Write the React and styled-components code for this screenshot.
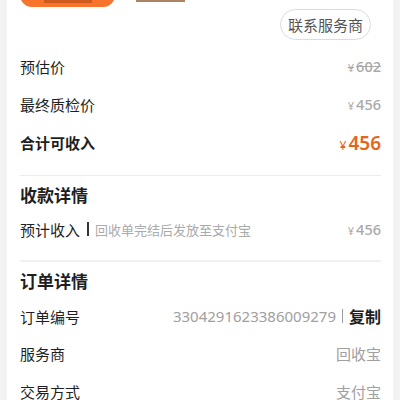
import React from 'react';
import styled, { createGlobalStyle } from 'styled-components';

const GlobalStyle = createGlobalStyle`
  html, body {
    margin: 0;
    padding: 0;
    background: #f2f2f2;
    font-family: "Noto Sans CJK SC", "Noto Sans", sans-serif;
  }
`;

export default function App() {
  return (
    <>
      <GlobalStyle />
      <Page>
        <Card>
          <TopActions>
            <PrimaryBtn>
              <BtnLabel />
            </PrimaryBtn>
            <GhostBtn />
          </TopActions>
          <ContactRow>
            <ContactBtn>联系服务商</ContactBtn>
          </ContactRow>

          <Row $h={38}>
            <Label>预估价</Label>
            <Price $strike>
              <Yen>¥</Yen>602
            </Price>
          </Row>
          <Row $h={38}>
            <Label>最终质检价</Label>
            <Price>
              <Yen>¥</Yen>456
            </Price>
          </Row>
          <Row $h={39}>
            <Label $bold>合计可收入</Label>
            <Price $total>
              <Yen $total>¥</Yen>456
            </Price>
          </Row>

          <Divider $top={13} />
          <Heading>收款详情</Heading>
          <Row $h={34}>
            <LabelGroup>
              <Label>预计收入</Label>
              <Bar />
              <Hint>回收单完结后发放至支付宝</Hint>
            </LabelGroup>
            <Price>
              <Yen>¥</Yen>456
            </Price>
          </Row>

          <Divider $top={14} $thick />
          <Heading>订单详情</Heading>
          <Row $h={36}>
            <Label>订单编号</Label>
            <ValueGroup>
              <Value>3304291623386009279</Value>
              <ThinBar />
              <CopyText>复制</CopyText>
            </ValueGroup>
          </Row>
          <Row $h={38}>
            <Label>服务商</Label>
            <Value>回收宝</Value>
          </Row>
          <Row $h={38}>
            <Label>交易方式</Label>
            <Value>支付宝</Value>
          </Row>
        </Card>
      </Page>
    </>
  );
}

const Page = styled.div`
  width: 400px;
  height: 400px;
  overflow: hidden;
  padding: 0 7px;
  box-sizing: border-box;
`;

const Card = styled.div`
  background: #fff;
  padding: 0 12px 0 13px;
  min-height: 420px;
`;

const TopActions = styled.div`
  display: flex;
  align-items: flex-end;
  gap: 21px;
  height: 7px;
  overflow: hidden;
`;

const PrimaryBtn = styled.div`
  flex: none;
  width: 95px;
  height: 34px;
  border-radius: 0 0 12px 12px;
  background: #f8732b;
  display: flex;
  justify-content: center;
  align-items: flex-end;
`;

const BtnLabel = styled.span`
  display: block;
  width: 48px;
  height: 3px;
  margin-bottom: 4px;
  background: #cf5a1d;
`;

const GhostBtn = styled.div`
  flex: none;
  width: 49px;
  height: 2px;
  margin-bottom: 5px;
  background: #a98566;
`;

const ContactRow = styled.div`
  display: flex;
  justify-content: flex-end;
  padding: 2px 10px 0 0;
  margin-bottom: 7px;
`;

const ContactBtn = styled.div`
  height: 29px;
  padding: 0 7px;
  border: 1px solid #dcdcdc;
  border-radius: 16px;
  display: flex;
  align-items: center;
  font-size: 15px;
  color: #555;
`;

const Row = styled.div`
  height: ${(p) => p.$h}px;
  display: flex;
  align-items: center;
  justify-content: space-between;
`;

const Label = styled.span`
  font-size: 15px;
  color: #1f1f1f;
  font-weight: ${(p) => (p.$bold ? 700 : 400)};
  white-space: nowrap;
`;

const LabelGroup = styled.div`
  display: flex;
  align-items: center;
`;

const Bar = styled.span`
  width: 2px;
  height: 14px;
  background: #333;
  margin: 0 6px 0 7px;
`;

const Hint = styled.span`
  font-size: 13px;
  color: #aaa;
  white-space: nowrap;
`;

const Price = styled.span`
  font-family: "Noto Sans", "Noto Sans CJK SC", sans-serif;
  font-size: ${(p) => (p.$total ? '19px' : '14.5px')};
  font-weight: ${(p) => (p.$total ? 600 : 500)};
  color: ${(p) => (p.$total ? '#e8641c' : '#a8a8a8')};
  text-decoration: ${(p) => (p.$strike ? 'line-through' : 'none')};
  display: flex;
  align-items: baseline;
`;

const Yen = styled.span`
  font-size: ${(p) => (p.$total ? '12px' : '11px')};
  font-weight: 400;
  margin-right: 2px;
`;

const Divider = styled.div`
  height: ${(p) => (p.$thick ? 2 : 1)}px;
  margin-top: ${(p) => p.$top}px;
  background: ${(p) => (p.$thick ? '#f1f1f1' : '#ececec')};
`;

const Heading = styled.div`
  height: 36px;
  display: flex;
  align-items: center;
  font-size: 17px;
  font-weight: 700;
  color: #1f1f1f;
`;

const ValueGroup = styled.div`
  display: flex;
  align-items: center;
`;

const Value = styled.span`
  font-family: "Noto Sans", "Noto Sans CJK SC", sans-serif;
  font-size: 15px;
  color: #a0a0a0;
  white-space: nowrap;
`;

const ThinBar = styled.span`
  width: 1px;
  height: 14px;
  background: #999;
  margin: 0 6px;
`;

const CopyText = styled.span`
  font-size: 16px;
  font-weight: 700;
  color: #1f1f1f;
`;
